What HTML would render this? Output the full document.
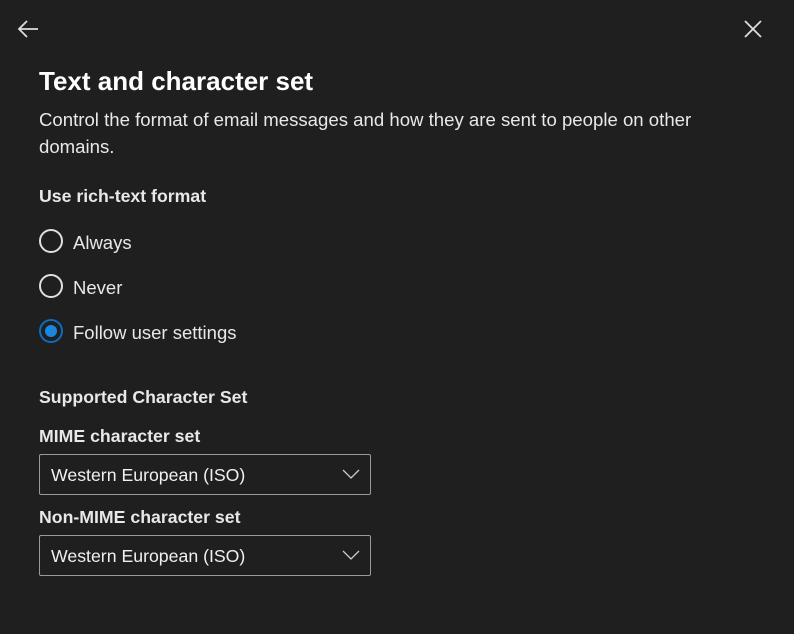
<html><head><style>
body{margin:0;width:794px;height:634px;background:#1f1f1f;font-family:"Liberation Sans",sans-serif;color:#fff;position:relative;overflow:hidden}
.a{position:absolute;white-space:nowrap}
.r{position:absolute;left:39px;width:24px;height:24px;border:2px solid #e0e0e0;border-radius:50%;box-sizing:border-box}
.s{position:absolute;left:39px;width:332px;height:41px;border:1px solid #9a9a9a;box-sizing:border-box;border-radius:2px}
.s span{position:absolute;left:11px;top:10px;font-size:17.7px;color:#f0f0f0}
.s svg{position:absolute;right:10px;top:14px}
.b{font-size:17.7px;font-weight:bold;color:#e8e8e8}
</style></head><body>
<svg class="a" style="left:16px;top:18px" width="24" height="22" viewBox="0 0 24 22"><path d="M22 11H3M11 3L3 11L11 19" stroke="#ddd" stroke-width="1.8" fill="none"/></svg>
<svg class="a" style="left:743px;top:19px" width="20" height="20" viewBox="0 0 20 20"><path d="M2 2L18 18M18 2L2 18" stroke="#ddd" stroke-width="1.8"/></svg>
<div class="a" style="left:39px;top:66px;font-size:26px;font-weight:bold">Text and character set</div>
<div class="a" style="left:39px;top:106px;font-size:18.6px;line-height:27px;color:#e8e8e8">Control the format of email messages and how they are sent to people on other<br>domains.</div>
<div class="a b" style="top:186px;left:39px">Use rich-text format</div>
<div class="r" style="top:229px"></div><div class="a" style="left:73px;top:232px;font-size:18.5px;color:#e8e8e8">Always</div>
<div class="r" style="top:274px"></div><div class="a" style="left:73px;top:277px;font-size:18.5px;color:#e8e8e8">Never</div>
<div class="r" style="top:319px;border-color:#0f6cbd"><div style="position:absolute;left:4px;top:4px;width:12px;height:12px;border-radius:50%;background:#1a86e0"></div></div>
<div class="a" style="left:73px;top:322px;font-size:18.5px;color:#e8e8e8">Follow user settings</div>
<div class="a b" style="left:39px;top:387px">Supported Character Set</div>
<div class="a b" style="left:39px;top:426px">MIME character set</div>
<div class="s" style="top:454px"><span>Western European (ISO)</span><svg width="18" height="11" viewBox="0 0 18 11"><path d="M1 1L9 9L17 1" stroke="#ccc" stroke-width="1.3" fill="none"/></svg></div>
<div class="a b" style="left:39px;top:507px">Non-MIME character set</div>
<div class="s" style="top:535px"><span>Western European (ISO)</span><svg width="18" height="11" viewBox="0 0 18 11"><path d="M1 1L9 9L17 1" stroke="#ccc" stroke-width="1.3" fill="none"/></svg></div>
</body></html>
